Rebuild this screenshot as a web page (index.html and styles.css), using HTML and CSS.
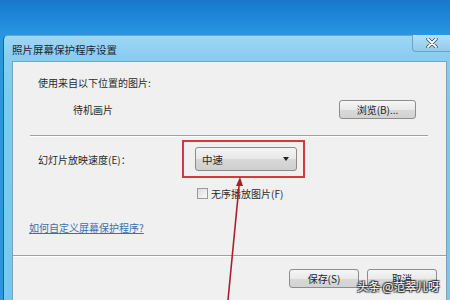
FILE: index.html
```html
<!DOCTYPE html>
<html lang="zh-CN">
    <head>
        <title>照片屏幕保护程序设置</title>
        <meta charset="utf-8">
        <link rel="stylesheet" href="styles.css">
    </head>
    <body>
      <div class="window">
          <div class="titlebar">
              <span class="title">照片屏幕保护程序设置</span>
              <span class="close">
                  <svg width="12" height="10" viewBox="0 0 12 10">
                      <path d="M2 1 L10 9 M10 1 L2 9" stroke="#3a4a5a" stroke-width="3.4" stroke-linecap="round"/>
                      <path d="M2 1 L10 9 M10 1 L2 9" stroke="#ffffff" stroke-width="1.8" stroke-linecap="round"/>
                  </svg>
              </span>
          </div>

          <div class="client">
              <div class="label first">使用来自以下位置的图片:</div>
              <div class="row-source">
                  <span class="path">待机画片</span>
                  <span class="btn browse">浏览(B)...</span>
              </div>

              <div class="sep"></div>

              <div class="row-speed">
                  <span class="label">幻灯片放映速度(E)：</span>
                  <div class="mark">
                      <div class="select">
                          <span>中速</span>
                          <span class="caret"></span>
                      </div>
                  </div>
              </div>

              <div class="row-check">
                  <span class="box"></span>
                  <span>无序播放图片(F)</span>
              </div>

              <a class="help" href="#">如何自定义屏幕保护程序?</a>

              <div class="sep wide"></div>

              <div class="row-buttons">
                  <span class="btn">保存(S)</span>
                  <span class="btn">取消</span>
              </div>
          </div>
      </div>

      <!-- red pointer drawn over the dialog -->
      <svg class="arrow" width="450" height="300" viewBox="0 0 450 300">
          <path d="M239.5 181 L228 300" stroke="#a8202c" stroke-width="1.6" fill="none"/>
          <path d="M240 177 L236 186 L243 186 Z" fill="#a8202c"/>
      </svg>

      <div class="watermark">头条 @范翠儿呀</div>
    </body>
</html>
```

FILE: styles.css
```css
body {
    margin: 0;
    width: 450px;
    height: 300px;
    overflow: hidden;
    position: relative;
    font-family: "Noto Sans CJK SC", "Liberation Sans", sans-serif;
    font-size: 10px;
    color: #2a2a2a;
    background: linear-gradient(180deg, #1679cc 0px, #1f8ad9 20px, #2a96e2 35px, #2a96e2 300px);
}

.window {
    margin: 35px 0 0 3px;
    height: 265px;
    border-left: 1px solid #2b5f86;
    border-top: 1px solid #5ea9d8;
    border-radius: 5px 0 0 0;
    background: linear-gradient(180deg, #9fd6f4 0px, #8acdf1 20px, #7ccbee 60px, #76c9ec 265px);
}

.titlebar {
    height: 25px;
    display: flex;
    align-items: flex-start;
}

.title {
    margin: 6px 0 0 8px;
    font-size: 10.5px;
    color: #1c2630;
}

.close {
    margin-left: auto;
    margin-top: -1px;
    width: 37px;
    height: 16px;
    display: flex;
    align-items: center;
    justify-content: center;
    border: 1px solid #6ba4c8;
    border-top: none;
    border-right: none;
    border-radius: 0 0 0 4px;
    background: linear-gradient(180deg, #b6def4, #8fcbec);
}

.client {
    margin-left: 8px;
    width: 433px;
    height: 239px;
    background: #f0f0f0;
    border: 1px solid #7aa2bd;
    border-bottom: none;
}

.label.first {
    margin: 14px 0 0 25px;
    line-height: 14px;
}

.row-source {
    display: flex;
    align-items: center;
    margin: 10px 30px 0 60px;
    height: 18px;
}

.btn {
    display: flex;
    align-items: center;
    justify-content: center;
    width: 68px;
    height: 17px;
    border: 1px solid #8d8d8d;
    border-radius: 3px;
    background: linear-gradient(180deg, #f6f6f6 0%, #e9e9e9 50%, #d9d9d9 51%, #d2d2d2 100%);
    color: #222;
}

.browse {
    margin-left: auto;
    width: 75px;
}

.sep {
    margin: 17px 18px 0 17px;
    height: 0;
    border-top: 1px solid #a0a0a0;
    border-bottom: 1px solid #ffffff;
}

.row-speed {
    display: flex;
    align-items: center;
    margin: 3px 0 0 25px;
}

.row-speed .label {
    width: 144px;
}

.mark {
    width: 108px;
    height: 23px;
    padding: 5px 0 6px 11px;
    border: 2px solid #d2383e;
}

.select {
    display: flex;
    align-items: center;
    width: 94px;
    height: 22px;
    padding-left: 6px;
    border: 1px solid #8a8a8a;
    border-radius: 3px;
    background: linear-gradient(180deg, #f4f4f4 0%, #e8e8e8 50%, #d8d8d8 51%, #cfcfcf 100%);
    font-size: 10.5px;
}

.caret {
    margin-left: auto;
    margin-right: 7px;
    border-left: 3.5px solid transparent;
    border-right: 3.5px solid transparent;
    border-top: 4px solid #222;
}

.row-check {
    display: flex;
    align-items: center;
    gap: 3px;
    margin: 8px 0 0 184px;
    height: 14px;
}

.box {
    width: 9px;
    height: 9px;
    border: 1px solid #9a9a9a;
    background: linear-gradient(135deg, #dcdcdc, #fafafa);
}

.help {
    display: block;
    margin: 21px 0 0 16px;
    width: 116px;
    color: #3b6fae;
    line-height: 14px;
}

.sep.wide {
    margin: 20px 0 0 0;
}

.row-buttons {
    display: flex;
    gap: 8px;
    justify-content: flex-end;
    margin: 12px 9px 0 0;
}

.arrow {
    position: absolute;
    left: 0;
    top: 0;
}

.watermark {
    position: absolute;
    left: 357px;
    top: 278px;
    white-space: nowrap;
    font-size: 11.5px;
    color: #ffffff;
    text-shadow: 0 0 1px #333, 1px 1px 1px #333, -1px -1px 1px #333, 1px -1px 1px #333, -1px 1px 1px #333;
}
```
